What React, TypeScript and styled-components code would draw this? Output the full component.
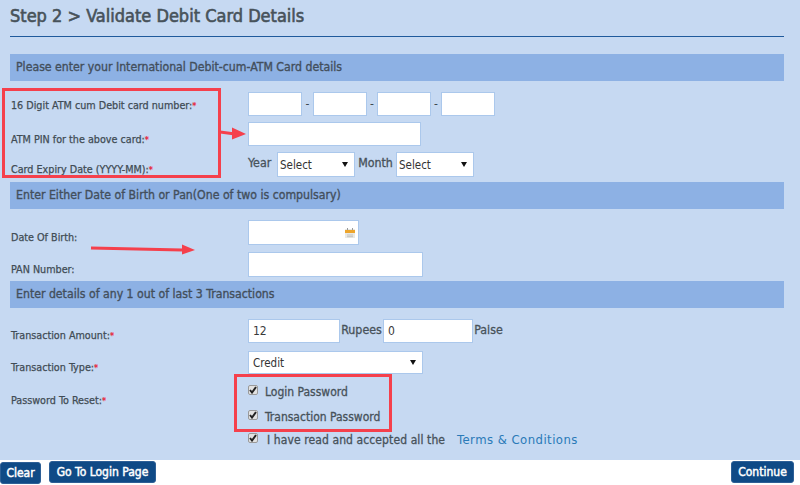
import React from "react";
import styled, { createGlobalStyle } from "styled-components";

const Global = createGlobalStyle`
  html, body { margin: 0; padding: 0; background: #fff; }
  body { font-family: "DejaVu Sans Condensed", "DejaVu Sans", sans-serif; color: #3f4a52; width: 800px; height: 485px; overflow: hidden; }
`;
const Page = styled.div`position: relative; width: 800px; height: 485px; overflow: hidden;`;
const Panel = styled.main`height: 460px; box-sizing: border-box; background: #c6d9f2; padding: 0 16px 0 10px;`;
const Title = styled.h1`
  margin: 0; height: 37px; box-sizing: border-box; padding-top: 3px; border-bottom: 1px solid #1f5a9c;
  font-size: 18px; line-height: 26px; font-weight: normal; -webkit-text-stroke: 0.6px #47525a; color: #47525a; white-space: nowrap;
`;
const Bar = styled.h2<{ $top: number }>`
  margin: ${p => p.$top}px 0 0; height: 27px; background: #8db1e4; padding-left: 6px;
  font-size: 12.2px; line-height: 26px; font-weight: normal; -webkit-text-stroke: 0.35px #434f5c; color: #434f5c; white-space: nowrap;
`;
const Row = styled.div<{ $h: number; $top?: number }>`
  display: grid; grid-template-columns: 238px 1fr; height: ${p => p.$h}px; margin-top: ${p => p.$top ?? 0}px;
`;
const Label = styled.label<{ $pad: number }>`
  padding: ${p => p.$pad}px 0 0 1px; font-size: 10.7px; line-height: 14px; font-weight: normal; -webkit-text-stroke: 0.25px #414c55; color: #414c55; white-space: nowrap;
`;
const Star = styled.span`color: #e8102a; font-size: 9px; -webkit-text-stroke: 0.2px #e8102a;`;
const Controls = styled.div`display: flex; align-items: flex-start;`;
const Field = styled.input<{ $w: number; $h?: number }>`
  width: ${p => p.$w}px; height: ${p => p.$h ?? 24}px; box-sizing: border-box; margin: 0;
  border: 1px solid #abc8ec; background: #fff; padding: 0 4px; flex: none; outline: 0;
  font-family: inherit; font-size: 12px; color: #3a3a3a;
`;
const Dash = styled.span<{ $w: number }>`width: ${p => p.$w}px; flex: none; text-align: center; font-size: 12px; line-height: 24px;`;
const Inline = styled.span<{ $w: number; $align?: string }>`
  width: ${p => p.$w}px; flex: none; font-size: 12.3px; line-height: 23px; -webkit-text-stroke: 0.3px #47525a; color: #47525a;
  text-align: ${p => p.$align ?? "center"}; white-space: nowrap;
`;
const SelectBox = styled.div<{ $w: number; $h?: number; $pad?: number }>`
  width: ${p => p.$w}px; height: ${p => p.$h ?? 25}px; box-sizing: border-box; flex: none;
  display: flex; align-items: center; justify-content: space-between; padding: 1px 6px 0 ${p => p.$pad ?? 2}px;
  background: #fff; border: 1px solid #abc8ec; font-size: 11.5px; color: #333;
`;
const Caret = styled.span`
  width: 0; height: 0; border-left: 3.5px solid transparent; border-right: 3.5px solid transparent; border-top: 5px solid #111; margin-bottom: 2px;
`;
const DateBox = styled.div`
  width: 111px; height: 25px; box-sizing: border-box; background: #fff; border: 1px solid #abc8ec;
  display: flex; align-items: center; justify-content: flex-end; padding-right: 2px;
`;
const CheckStack = styled.div`margin-top: -1px;`;
const CheckRow = styled.div<{ $h: number; $gap?: number }>`
  display: flex; align-items: flex-start; height: ${p => p.$h}px; gap: ${p => p.$gap ?? 7}px;
`;
const Check = styled.span`
  width: 10px; height: 10px; flex: none; box-sizing: border-box; border: 1px solid #9a9a9a; border-radius: 2px;
  background: #e2e2e2; display: flex; align-items: center; justify-content: center;
`;
const CheckText = styled.span<{ $track?: number }>`
  font-size: 12px; line-height: 14px; letter-spacing: ${p => p.$track ?? 0}px; -webkit-text-stroke: 0.3px #47525a; color: #47525a; white-space: nowrap;
`;
const TermsLink = styled.a`font-size: 13px; line-height: 14px; margin-left: 3px; color: #2a7ab8; letter-spacing: .45px; white-space: nowrap;`;
const Footer = styled.footer`
  display: flex; height: 25px; padding: 1px 6px 0 0; align-items: flex-start;
`;
const Btn = styled.button<{ $w: number; $top?: number; $left?: number }>`
  width: ${p => p.$w}px; height: 21.5px; margin: ${p => p.$top ?? 0}px 0 0 ${p => p.$left ?? 0}px; padding: 0; border: 1px solid #2d5f96;
  border-radius: 3px; background: #0f4a86; color: #fff; font-family: inherit; font-size: 12px; font-weight: normal; -webkit-text-stroke: 0.45px #fff; line-height: 18px; white-space: nowrap;
`;
const Spacer = styled.div`flex: 1;`;
const Callout = styled.div<{ $x: number; $y: number; $w: number; $h: number }>`
  position: absolute; left: ${p => p.$x}px; top: ${p => p.$y}px; width: ${p => p.$w}px; height: ${p => p.$h}px;
  box-sizing: border-box; border: 3px solid #f5404c; pointer-events: none;
`;
const ArrowSvg = styled.svg<{ $x: number; $y: number }>`position: absolute; left: ${p => p.$x}px; top: ${p => p.$y}px;`;

const Req = () => <Star>*</Star>;
const Tick = () => (
  <svg width="8" height="8" viewBox="0 0 8 8"><path d="M1 4 L3 6.5 L7 1" fill="none" stroke="#222" strokeWidth="2" /></svg>
);

export default function App() {
  return (
    <Page>
      <Global />
      <Panel>
        <Title>Step 2 &gt; Validate Debit Card Details</Title>
        <Bar $top={17}>Please enter your International Debit-cum-ATM Card details</Bar>
        <Row $h={30} $top={11}>
          <Label $pad={7}>16 Digit ATM cum Debit card number:<Req /></Label>
          <Controls>
            <Field $w={54} /><Dash $w={11}>-</Dash><Field $w={54} /><Dash $w={10}>-</Dash><Field $w={54} /><Dash $w={10}>-</Dash><Field $w={54} />
          </Controls>
        </Row>
        <Row $h={30}>
          <Label $pad={11}>ATM PIN for the above card:<Req /></Label>
          <Controls><Field $w={173} /></Controls>
        </Row>
        <Row $h={30}>
          <Label $pad={11}>Card Expiry Date (YYYY-MM):<Req /></Label>
          <Controls>
            <Inline $w={29} $align="left">Year</Inline>
            <SelectBox $w={78}>Select<Caret /></SelectBox>
            <Inline $w={41}>Month</Inline>
            <SelectBox $w={78}>Select<Caret /></SelectBox>
          </Controls>
        </Row>
        <Bar $top={0}>Enter Either Date of Birth or Pan(One of two is compulsary)</Bar>
        <Row $h={32} $top={11}>
          <Label $pad={11}>Date Of Birth:</Label>
          <Controls>
            <DateBox>
              <svg width="12" height="12" viewBox="0 0 12 12">
                <rect x="1" y="2" width="10" height="9" fill="#e9e9e4" />
                <rect x="1" y="3" width="10" height="3" fill="#eda52c" />
                <rect x="3" y="1" width="1" height="2" fill="#999" />
                <rect x="8" y="1" width="1" height="2" fill="#999" />
                <path d="M3 8h6M3 9.7h6" stroke="#b9b9b9" strokeWidth="0.8" />
              </svg>
            </DateBox>
          </Controls>
        </Row>
        <Row $h={29}>
          <Label $pad={11}>PAN Number:</Label>
          <Controls><Field $w={175} $h={25} /></Controls>
        </Row>
        <Bar $top={0}>Enter details of any 1 out of last 3 Transactions</Bar>
        <Row $h={32} $top={11}>
          <Label $pad={10}>Transaction Amount:<Req /></Label>
          <Controls>
            <Field $w={92} defaultValue="12" />
            <Inline $w={43}>Rupees</Inline>
            <Field $w={90} defaultValue="0" />
            <Inline $w={31}>Paise</Inline>
          </Controls>
        </Row>
        <Row $h={35}>
          <Label $pad={10}>Transaction Type:<Req /></Label>
          <Controls><SelectBox $w={175} $h={23} $pad={4}>Credit<Caret /></SelectBox></Controls>
        </Row>
        <Row $h={73}>
          <Label $pad={8}>Password To Reset:<Req /></Label>
          <CheckStack>
            <CheckRow $h={25}><Check><Tick /></Check><CheckText>Login Password</CheckText></CheckRow>
            <CheckRow $h={23}><Check><Tick /></Check><CheckText>Transaction Password</CheckText></CheckRow>
            <CheckRow $h={20} $gap={9}>
              <Check><Tick /></Check>
              <CheckText $track={0.1}>I have read and accepted all the</CheckText>
              <TermsLink>Terms &amp; Conditions</TermsLink>
            </CheckRow>
          </CheckStack>
        </Row>
      </Panel>
      <Footer>
        <Btn $w={41} $top={1}>Clear</Btn>
        <Btn $w={107} $left={8}>Go To Login Page</Btn>
        <Spacer />
        <Btn $w={63}>Continue</Btn>
      </Footer>

      <Callout $x={2} $y={88} $w={219} $h={90} />
      <Callout $x={234} $y={374} $w={158} $h={58} />
      <ArrowSvg $x={220} $y={124} width="26" height="18" viewBox="0 0 26 18">
        <path d="M0 8 L15 10" stroke="#f5404c" strokeWidth="3" fill="none" />
        <path d="M12 3.5 L26 10 L12 15.5 Z" fill="#f5404c" />
      </ArrowSvg>
      <ArrowSvg $x={90} $y={242} width="106" height="14" viewBox="0 0 106 14">
        <path d="M1 6 L92 8" stroke="#f5404c" strokeWidth="3" fill="none" />
        <path d="M92 2.5 L105 8 L92 12.5 Z" fill="#f5404c" />
      </ArrowSvg>
    </Page>
  );
}
